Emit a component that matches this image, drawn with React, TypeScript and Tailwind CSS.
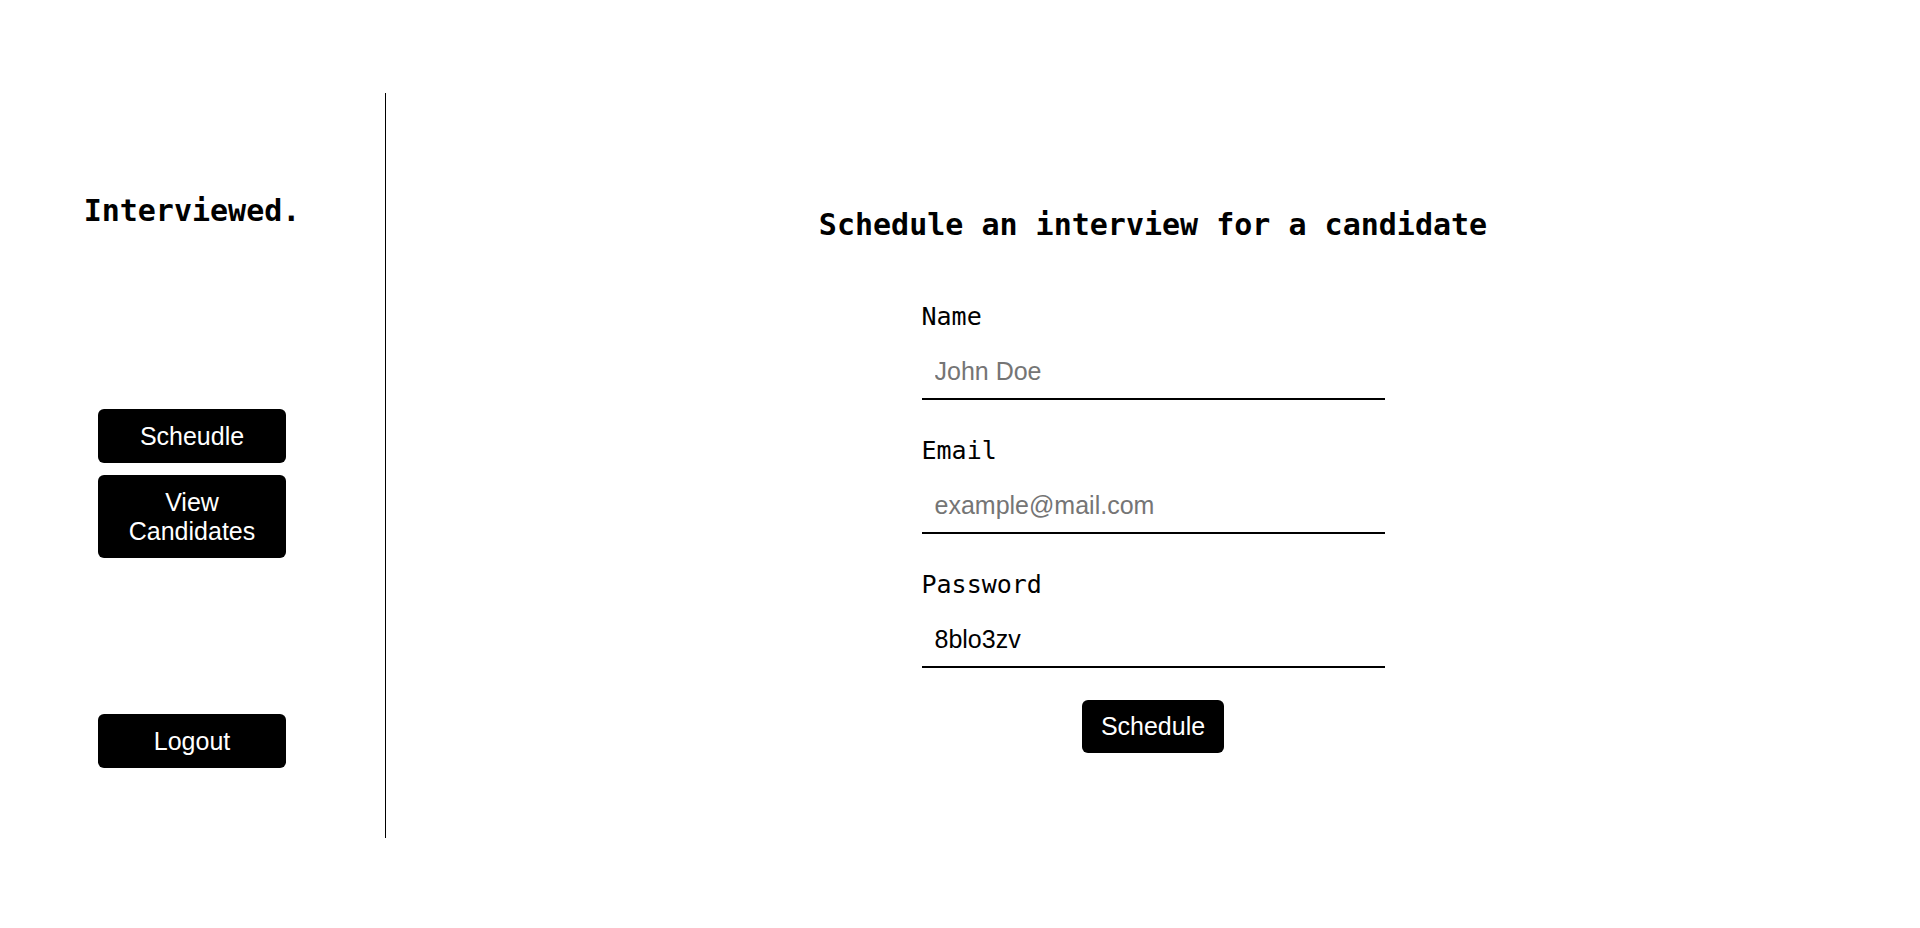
import { useState } from "react";

const mono = "font-['DejaVu_Sans_Mono',monospace]";
const sans = "font-['Liberation_Sans',Arial,sans-serif]";

function SideButton({ children }: { children: React.ReactNode }): JSX.Element {
  return (
    <button
      type="button"
      className={`${sans} w-[188px] rounded-md bg-black px-4 py-[12.5px] text-[25px] leading-[29px] text-white`}
    >
      {children}
    </button>
  );
}

function Field({
  label,
  value,
  placeholder,
  onChange,
}: {
  label: string;
  value: string;
  placeholder?: string;
  onChange: (v: string) => void;
}): JSX.Element {
  return (
    <label className="flex flex-col">
      <span className={`${mono} text-[25px] leading-[30px] text-black`}>{label}</span>
      <input
        value={value}
        placeholder={placeholder}
        onChange={(e) => onChange(e.target.value)}
        className={`${sans} mt-[13px] border-b-2 border-black py-3 pl-[13px] pr-3 text-[25px] leading-[29px] text-black outline-none placeholder:text-[#757575]`}
      />
    </label>
  );
}

export default function App(): JSX.Element {
  const [name, setName] = useState("");
  const [email, setEmail] = useState("");
  const [password, setPassword] = useState("8blo3zv");

  return (
    <div className="h-screen bg-white pt-[93px]">
      <div className="flex h-[745px] w-full">
        <aside className="flex w-[386px] flex-col items-center border-r border-black pr-px pt-[100px]">
          <h1 className={`${mono} text-[30px] font-bold leading-[36px] text-black`}>Interviewed.</h1>
          <nav className="mt-[180px] flex flex-col gap-3">
            <SideButton>Scheudle</SideButton>
            <SideButton>View Candidates</SideButton>
          </nav>
          <div className="mt-[156px]">
            <SideButton>Logout</SideButton>
          </div>
        </aside>

        <main className="flex flex-1 flex-col items-center pt-[114px]">
          <h2 className={`${mono} text-[30px] font-bold leading-[36px] text-black`}>
            Schedule an interview for a candidate
          </h2>
          <form
            className="mt-[59px] flex w-[463px] flex-col gap-9"
            onSubmit={(e) => e.preventDefault()}
          >
            <Field label="Name" value={name} placeholder="John Doe" onChange={setName} />
            <Field label="Email" value={email} placeholder="example@mail.com" onChange={setEmail} />
            <Field label="Password" value={password} onChange={setPassword} />
            <div className="-mt-1 flex justify-center">
              <button
                type="submit"
                className={`${sans} rounded-md bg-black px-[19px] py-3 text-[25px] leading-[29px] text-white`}
              >
                Schedule
              </button>
            </div>
          </form>
        </main>
      </div>
    </div>
  );
}
